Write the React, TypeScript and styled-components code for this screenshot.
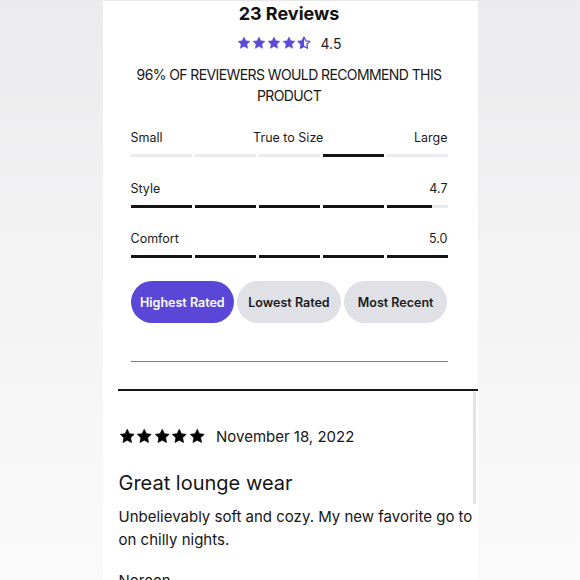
import React from "react";
import styled, { createGlobalStyle } from "styled-components";

const Global = createGlobalStyle`
  html, body { margin: 0; padding: 0; }
  body {
    width: 580px;
    height: 580px;
    overflow: hidden;
    background: linear-gradient(to bottom, #ebebed 0%, #f3f3f4 45%, #fafafa 100%);
    font-family: Inter, "Noto Sans", Arial, sans-serif;
    color: #111;
  }
`;

const Page = styled.div`
  display: flex;
  justify-content: center;
  align-items: flex-start;
  height: 580px;
  overflow: hidden;
`;

const Card = styled.div`
  position: relative;
  width: 375px;
  min-height: 600px;
  background: #fff;
  border-top: 1px solid #e6e6e8;
`;

const Summary = styled.section`
  padding: 2px 30px 0 28px;
  display: flex;
  flex-direction: column;
  align-items: stretch;
`;

const Title = styled.h2`
  margin: 0;
  text-align: center;
  font-size: 18px;
  line-height: 22px;
  font-weight: 700;
  color: #111;
`;

const RatingRow = styled.div`
  margin-top: 10px;
  display: flex;
  justify-content: center;
  align-items: center;
  gap: 10px;
  height: 16px;
`;

const Stars = styled.div<{ $gap: number }>`
  display: flex;
  gap: ${(p) => p.$gap}px;
  align-items: center;
`;

const Score = styled.span`
  font-size: 14px;
  color: #222;
`;

const Recommend = styled.p`
  margin: 13px 0 0;
  text-align: center;
  font-size: 14px;
  line-height: 21px;
  letter-spacing: -0.6px;
  text-transform: uppercase;
  color: #161616;
`;

const Metric = styled.div<{ $mt: number }>`
  margin-top: ${(p) => p.$mt}px;
  display: flex;
  flex-direction: column;
  gap: 8px;
`;

const MetricLabels = styled.div`
  display: flex;
  justify-content: space-between;
  font-size: 12.5px;
  line-height: 16px;
  color: #1b1b1b;
`;

const Bar = styled.div`
  display: grid;
  grid-template-columns: repeat(5, 1fr);
  gap: 3px;
`;

const Segment = styled.div`
  height: 3px;
  background: #e9eaee;
  position: relative;
  overflow: hidden;
`;

const SegmentFill = styled.div`
  position: absolute;
  left: 0;
  top: 0;
  bottom: 0;
  background: #141414;
`;

const Filters = styled.div`
  margin-top: 23px;
  display: grid;
  grid-template-columns: repeat(3, 1fr);
  gap: 3px;
`;

const FilterButton = styled.button<{ $active?: boolean }>`
  height: 42px;
  border: none;
  border-radius: 21px;
  padding: 0;
  font-family: Inter, "Noto Sans", Arial, sans-serif;
  font-size: 12.5px;
  font-weight: 600;
  background: ${(p) => (p.$active ? "#5b47d7" : "#dfe1e7")};
  color: ${(p) => (p.$active ? "#fff" : "#1a1a1a")};
`;

const Rule = styled.hr`
  margin: 38px 0 0;
  border: none;
  height: 1px;
  background: #7a7a7a;
`;

const ThickRule = styled.div`
  margin: 27px 0 0 15px;
  height: 2px;
  background: #151515;
`;

const Review = styled.article`
  padding: 0 0 0 16px;
  display: flex;
  flex-direction: column;
`;

const ReviewMeta = styled.div`
  margin-top: 36px;
  display: flex;
  align-items: center;
  gap: 11px;
  height: 18px;
`;

const ReviewDate = styled.span`
  font-size: 15px;
  color: #161616;
`;

const ReviewTitle = styled.h3`
  margin: 26px 0 0;
  font-size: 20px;
  line-height: 24px;
  font-weight: 400;
  color: #151515;
`;

const ReviewBody = styled.p`
  margin: 10px 0 0;
  font-size: 15px;
  line-height: 23px;
  color: #161616;
`;

const Author = styled.div`
  margin-top: 18px;
  font-size: 15px;
  line-height: 23px;
  color: #161616;
`;

const Scrollbar = styled.div`
  position: absolute;
  left: 370px;
  top: 391px;
  width: 3px;
  height: 112px;
  background: #e4e4e6;
`;

const STAR =
  "M12 1.8l3.1 6.5 7 .9-5.2 4.9 1.3 7L12 17.7l-6.2 3.4 1.3-7L1.9 9.2l7-.9L12 1.8z";

function Star({ size, color, half }: { size: number; color: string; half?: boolean }) {
  const id = React.useId();
  return (
    <svg width={size} height={size} viewBox="0 0 24 24">
      {half ? (
        <>
          <defs>
            <clipPath id={id}>
              <rect x="0" y="0" width="12" height="24" />
            </clipPath>
          </defs>
          <path d={STAR} fill="none" stroke={color} strokeWidth="2.2" strokeLinejoin="round" />
          <path d={STAR} fill={color} clipPath={`url(#${id})`} />
        </>
      ) : (
        <path d={STAR} fill={color} stroke={color} strokeWidth="1" strokeLinejoin="round" />
      )}
    </svg>
  );
}

function SegBar({ fills }: { fills: number[] }) {
  return (
    <Bar>
      {fills.map((f, i) => (
        <Segment key={i}>
          <SegmentFill style={{ width: `${f * 100}%` }} />
        </Segment>
      ))}
    </Bar>
  );
}

export default function App() {
  return (
    <>
      <Global />
      <Page>
        <Card>
          <Summary>
            <Title>23 Reviews</Title>
            <RatingRow>
              <Stars $gap={1}>
                {[0, 1, 2, 3].map((i) => (
                  <Star key={i} size={14} color="#5b4bd6" />
                ))}
                <Star size={14} color="#5b4bd6" half />
              </Stars>
              <Score>4.5</Score>
            </RatingRow>
            <Recommend>96% of reviewers would recommend this product</Recommend>

            <Metric $mt={24}>
              <MetricLabels>
                <span>Small</span>
                <span>True to Size</span>
                <span>Large</span>
              </MetricLabels>
              <SegBar fills={[0, 0, 0, 1, 0]} />
            </Metric>

            <Metric $mt={24}>
              <MetricLabels>
                <span>Style</span>
                <span>4.7</span>
              </MetricLabels>
              <SegBar fills={[1, 1, 1, 1, 0.75]} />
            </Metric>

            <Metric $mt={23}>
              <MetricLabels>
                <span>Comfort</span>
                <span>5.0</span>
              </MetricLabels>
              <SegBar fills={[1, 1, 1, 1, 1]} />
            </Metric>

            <Filters>
              <FilterButton $active>Highest Rated</FilterButton>
              <FilterButton>Lowest Rated</FilterButton>
              <FilterButton>Most Recent</FilterButton>
            </Filters>

            <Rule />
          </Summary>

          <ThickRule />

          <Review>
            <ReviewMeta>
              <Stars $gap={1}>
                {[0, 1, 2, 3, 4].map((i) => (
                  <Star key={i} size={16.5} color="#000" />
                ))}
              </Stars>
              <ReviewDate>November 18, 2022</ReviewDate>
            </ReviewMeta>
            <ReviewTitle>Great lounge wear</ReviewTitle>
            <ReviewBody>
              Unbelievably soft and cozy. My new favorite go to on chilly nights.
            </ReviewBody>
            <Author>Noreen</Author>
          </Review>
          <Scrollbar />
        </Card>
      </Page>
    </>
  );
}
